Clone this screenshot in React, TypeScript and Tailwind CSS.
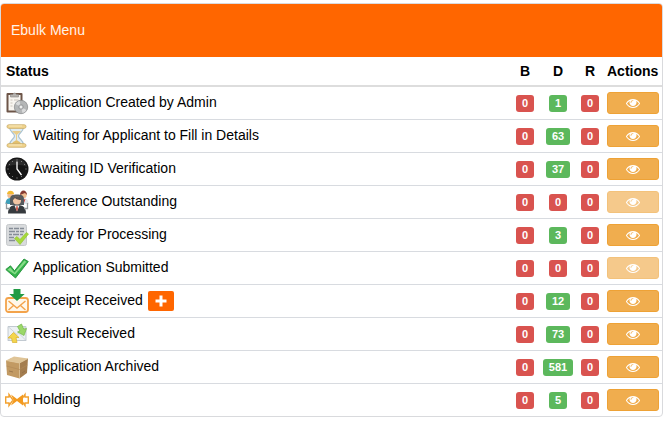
import React from "react";

type Row = {
  label: string;
  icon: React.ReactNode;
  counts: [number, number, number];
  disabled?: boolean;
  addable?: boolean;
};

function Icon({ children }: { children: React.ReactNode }) {
  return (
    <svg viewBox="0 0 24 24" className="size-6 shrink-0" fill="none" aria-hidden="true">
      {children}
    </svg>
  );
}

const ClipboardDisc = () => (
  <Icon>
    <rect x="1.500" y="2" width="16" height="19.500" rx="1" fill="#6d5548" />
    <path d="M3.500 4h12v15.500h-12z" fill="#f8f5f0" />
    <path d="M5.500 3.500h2.200a2 2 0 0 1 3.800 0h2V6h-8z" fill="#b5b2ae" stroke="#85817d" strokeWidth=".6" />
    <path d="M5.500 9h2M9 9h4.500M5.500 12h2M5.500 15h2" stroke="#cbc4bb" />
    <circle cx="16" cy="16" r="6.700" fill="#b4b6b7" stroke="#858788" strokeWidth=".7" />
    <path d="M16 16 10.500 13a6.200 6.200 0 0 1 4-3zM16 16l5.500 3a6.200 6.200 0 0 1-4 3z" fill="#d9dadb" />
    <circle cx="16" cy="16" r="2.300" fill="#c9cacb" stroke="#858788" strokeWidth=".6" />
    <circle cx="16" cy="16" r=".9" fill="#fff" />
  </Icon>
);

const Hourglass = () => (
  <Icon>
    <path d="M4.500 3h14c0 5-5 6-5 9s5 4 5 9h-14c0-5 5-6 5-9s-5-4-5-9z" fill="#e1edf3" stroke="#a9c2d0" strokeWidth="1.200" />
    <path d="M7 7h9c-1 2-3.500 2.500-4.500 4.500C10.500 9.500 8 9 7 7z" fill="#e8cd8b" />
    <path d="M7 20c.5-2.500 3-2.500 4.500-4.500 1.500 2 4 2 4.500 4.500z" fill="#e3c06c" />
    <path d="M11.500 11v6" stroke="#e8cd8b" />
    <rect x="2" y=".7" width="19" height="3.700" rx="1.800" fill="#f0d48d" stroke="#c7a763" strokeWidth=".7" />
    <rect x="2" y="19.600" width="19" height="3.700" rx="1.800" fill="#f0d48d" stroke="#c7a763" strokeWidth=".7" />
    <path d="M4 2h13M4 21h13" stroke="#faecc6" strokeWidth=".8" />
  </Icon>
);

const Clock = () => (
  <Icon>
    <circle cx="12" cy="12" r="11.500" fill="#151515" />
    <path d="M2 10a10.200 10.200 0 0 1 20 0C16 7 8 7 2 10z" fill="#2b2b2b" />
    <path d="M12 2.500v1M12 20.500v1M2.500 12h1M20.500 12h1M7.200 4l.4.700M16.800 4l-.4.700M4 7.200l.7.400M20 7.200l-.7.400M4 16.800l.7-.4M7.200 20l.4-.7M16.800 20l-.4-.7" stroke="#c4c4c4" strokeWidth=".8" />
    <path d="M12 4.500V12l4.500 6" stroke="#fff" strokeWidth="1.300" />
  </Icon>
);

const People = () => (
  <Icon>
    <path d="M.5 14c0-4 2-6 5-6s5 2 5 6z" fill="#3f9fb9" />
    <path d="M14 14c0-4 1.500-6 4.500-6s5 2 5 6z" fill="#e0e4e9" />
    <circle cx="5.500" cy="5" r="3.200" fill="#f0bd91" />
    <path d="M2 4C2-.5 9-.5 9 4z" fill="#f1b932" />
    <circle cx="18.500" cy="5" r="3.200" fill="#f0bd91" />
    <path d="M15 5c0-6 7-6 7 0l-2-2z" fill="#873c34" />
    <path d="m17 9 1.500 4L20 9" stroke="#d83b39" />
    <path d="M5 15V9.500C5 5 8 4.500 12 4.500s7 .5 7 5V15z" fill="#555a5e" />
    <path d="M3 23.500c0-6 3-8.500 9-8.500s9 2.500 9 8.500z" fill="#363a3e" />
    <circle cx="12" cy="10.500" r="4" fill="#f2c5a4" />
    <path d="M8 10c-1-5 9-5 8 0-2 0-5-.5-6-2z" fill="#5c5450" />
    <path d="m9.500 15.500 2.500 6 2.500-6z" fill="#f6f6f6" />
    <path d="m11.500 16-.5 3 1 2.500 1-2.500-.5-3z" fill="#cc4b3d" />
    <path d="M1.500 13v5.500H5M22.500 13v5.500H19" stroke="#92979b" strokeWidth="1.300" />
  </Icon>
);

const ReadyDocument = () => (
  <Icon>
    <rect x="1.500" y="1.500" width="20" height="21" rx="2" fill="#d9dbdd" stroke="#c5c8cb" />
    <path d="M4 5.500h4M9 5.500h5M15 5.500h4M4 8.500h6M11 8.500h3M15 8.500h4M4 11.500h3M8 11.500h6M15 11.500h3M4 14.500h5M4 17.500h6" stroke="#858c96" strokeWidth="1.400" />
    <path d="m9.500 15.500 2.500-2 3 3 6.500-7L23.500 11 15 21.500z" fill="#a7d93d" stroke="#8bc427" strokeWidth=".6" />
  </Icon>
);

const Tick = () => (
  <Icon>
    <path d="m.8 13.500 4.700-3.700 4 5L19 3l4.300 2.500L10.500 22z" fill="#35b34c" stroke="#25913b" strokeWidth=".9" strokeLinejoin="round" />
    <path d="m2.500 13.700 2.800-2.200 4.200 5.200L19.300 4.500l2 1.200L10 18.500z" fill="#86dc87" />
  </Icon>
);

const MailDown = () => (
  <Icon>
    <rect x="1" y="9" width="22" height="14" rx="2.500" fill="#fff8eb" stroke="#f3a34b" strokeWidth="1.800" />
    <path d="m3.500 12 8.500 7 8.500-7M3.500 21l5-4.500M20.500 21l-5-4.500" stroke="#f3a34b" strokeWidth="1.400" />
    <path d="M8.500 0h7v5h4.200L12 12 4.300 5h4.200z" fill="#229b45" />
  </Icon>
);

const MailExchange = () => (
  <Icon>
    <path d="M3 4.500h18v14H3z" fill="#edf1f4" stroke="#b5bec6" strokeWidth=".8" />
    <path d="m3 4.500 9 8 9-8M3 18.500l7-7M21 18.500l-7-7" stroke="#c5cdd3" strokeWidth=".8" />
    <path d="m12.500 4.500 4-2.500 2.200 5 2.800-.5-2.500 7-6.500-3.500 2.500-1z" fill="#9bd868" stroke="#76b64b" strokeWidth=".7" />
    <path d="m8.500 10.500 5.500 5h-3l1 5H7.500l-1-4.500H3z" fill="#f4d54c" stroke="#d8b02d" strokeWidth=".7" />
  </Icon>
);

const Box = () => (
  <Icon>
    <path d="M1 5.500 9 1.500l14 2L14.500 8z" fill="#dfc497" />
    <path d="M1 5.500 14.500 8v15.500L2 20z" fill="#c29a63" />
    <path d="M14.500 8 23 3.500 22 18l-7.500 5.500z" fill="#a47d4f" />
    <path d="m5 3.500 13.500 2.300M1 5.500 14.500 8 23 3.500M14.500 8v15" stroke="#e1c799" strokeWidth=".7" />
    <path d="m1.500 11 13 3.500 8-4.500" stroke="#b18a57" strokeWidth=".7" />
    <path d="m4 16 4 1M17 18l3-2" stroke="#8c6a43" strokeWidth=".7" />
  </Icon>
);

const Holding = () => (
  <Icon>
    <path d="M.7 9H4V6.500L8 12l-4 5.500V15H.7zM23.300 9H20V6.500L16 12l4 5.500V15h3.300z" stroke="#f2a12f" strokeWidth="1.400" />
    <path d="M6 6.500 12 11l6-4.500v11L12 13l-6 4.500 2.500-5.500z" fill="#f39a1f" />
  </Icon>
);

const Eye = () => (
  <svg viewBox="0 0 1792 1792" className="size-3.5" fill="currentColor" aria-hidden="true">
    <path d="M1664 960q-152-236-381-353 61 104 61 225 0 185-131.500 316.500t-316.500 131.500-316.500-131.500-131.500-316.500q0-121 61-225-229 117-381 353 133 205 333.500 326.500t434.500 121.500 434.500-121.500 333.500-326.500zM944 576q0-20-14-34t-34-14q-125 0-214.500 89.500t-89.500 214.500q0 20 14 34t34 14 34-14 14-34q0-86 61-147t147-61q20 0 34-14t14-34zM1792 960q0 34-20 69-140 230-376.500 368.500t-499.500 138.500-499.500-139-376.500-368q-20-35-20-69t20-69q140-229 376.500-368t499.500-139 499.500 139 376.500 368q20 35 20 69z" />
  </svg>
);

const rows: Row[] = [
  { label: "Application Created by Admin", icon: <ClipboardDisc />, counts: [0, 1, 0] },
  { label: "Waiting for Applicant to Fill in Details", icon: <Hourglass />, counts: [0, 63, 0] },
  { label: "Awaiting ID Verification", icon: <Clock />, counts: [0, 37, 0] },
  { label: "Reference Outstanding", icon: <People />, counts: [0, 0, 0], disabled: true },
  { label: "Ready for Processing", icon: <ReadyDocument />, counts: [0, 3, 0] },
  { label: "Application Submitted", icon: <Tick />, counts: [0, 0, 0], disabled: true },
  { label: "Receipt Received", icon: <MailDown />, counts: [0, 12, 0], addable: true },
  { label: "Result Received", icon: <MailExchange />, counts: [0, 73, 0] },
  { label: "Application Archived", icon: <Box />, counts: [0, 581, 0] },
  { label: "Holding", icon: <Holding />, counts: [0, 5, 0] },
];

function Badge({ value }: { value: number }) {
  return (
    <span
      className={`mx-auto block h-[17px] w-fit rounded-[3px] px-1.5 text-[11px] leading-[17px] font-bold text-white ${
        value > 0 ? "bg-[#5cb85c]" : "bg-[#d9534f]"
      }`}
    >
      {value}
    </span>
  );
}

export default function App() {
  return (
    <main className="bg-white pt-[3px] pr-1 font-['Liberation_Sans',Arial,sans-serif] text-sm text-black">
      <section className="overflow-hidden rounded border border-[#d9dadd]">
        <header className="bg-[#ff6600] px-2.5 py-4 leading-[21px] text-[#fff3e8]">
          <h1>Ebulk Menu</h1>
        </header>
        <table className="w-full table-fixed border-separate border-spacing-0">
          <colgroup>
            <col />
            <col className="w-[26px]" />
            <col className="w-10" />
            <col className="w-6" />
            <col className="w-[60px]" />
          </colgroup>
          <thead>
            <tr className="h-[30px] *:border-b-2 *:border-[#dddddd] *:p-0 *:font-bold">
              <th scope="col" className="text-left">
                <span className="pl-[5px]">Status</span>
              </th>
              <th scope="col">B</th>
              <th scope="col">D</th>
              <th scope="col">R</th>
              <th scope="col" className="text-left">
                <span className="pl-[5px]">Actions</span>
              </th>
            </tr>
          </thead>
          <tbody>
            {rows.map((row) => (
              <tr key={row.label} className="h-[33px] *:border-b *:border-[#d8dbe0] *:p-0 last:h-8 last:*:border-b-0">
                <td>
                  <div className="flex items-end gap-1 pl-1">
                    {row.icon}
                    <span className="pb-[3px] leading-5">{row.label}</span>
                    {row.addable && (
                      <button
                        type="button"
                        aria-label="Add receipt"
                        className="ml-px flex h-5 w-[26px] items-center justify-center self-center rounded-xs bg-[#ff6600] text-white"
                      >
                        <svg viewBox="0 0 12 12" className="size-3" fill="currentColor" aria-hidden="true">
                          <path d="M4.500.5h3v4h4v3h-4v4h-3v-4h-4v-3h4z" />
                        </svg>
                      </button>
                    )}
                  </div>
                </td>
                {row.counts.map((count, i) => (
                  <td key={i}>
                    <Badge value={count} />
                  </td>
                ))}
                <td>
                  <div className="pr-[3px] pl-[5px]">
                    <button
                      type="button"
                      disabled={row.disabled}
                      aria-label={`View ${row.label}`}
                      className="flex h-[22px] w-full items-center justify-center rounded-[3px] border border-[#eea236] bg-[#f0ad4e] text-white disabled:opacity-65"
                    >
                      <Eye />
                    </button>
                  </div>
                </td>
              </tr>
            ))}
          </tbody>
        </table>
      </section>
    </main>
  );
}
